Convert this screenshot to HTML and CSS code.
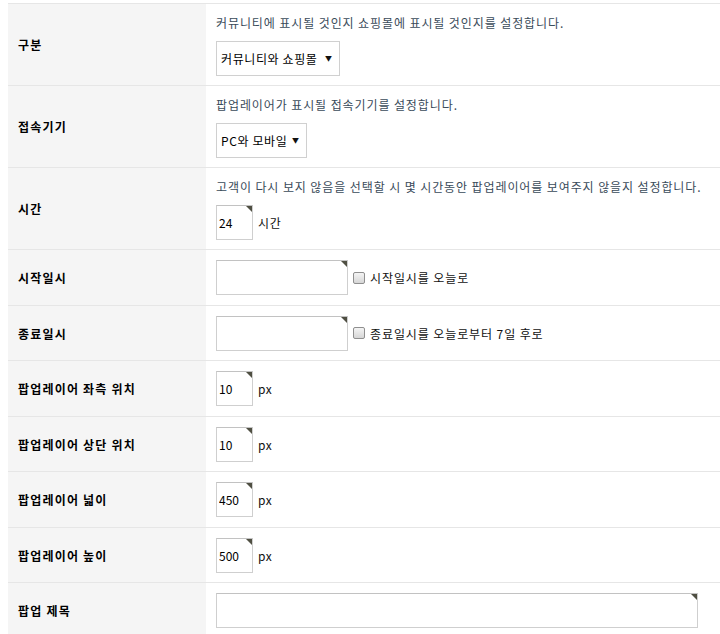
FILE: index.html
```html
<!DOCTYPE html>
<html>
<head>
<meta charset="UTF-8">
<title>팝업 설정</title>
<link rel="stylesheet" href="styles.css">
</head>
<body>
<table class="form">
<tr>
	<th>구분</th>
	<td>
		<p class="desc">커뮤니티에 표시될 것인지 쇼핑몰에 표시될 것인지를 설정합니다.</p>
		<div class="line">
			<span class="sel sel-wide"><select><option>커뮤니티와 쇼핑몰</option><option>커뮤니티</option><option>쇼핑몰</option></select></span>
		</div>
	</td>
</tr>
<tr>
	<th>접속기기</th>
	<td>
		<p class="desc">팝업레이어가 표시될 접속기기를 설정합니다.</p>
		<div class="line">
			<span class="sel sel-small"><select><option>PC와 모바일</option><option>PC</option><option>모바일</option></select></span>
		</div>
	</td>
</tr>
<tr>
	<th>시간</th>
	<td>
		<p class="desc">고객이 다시 보지 않음을 선택할 시 몇 시간동안 팝업레이어를 보여주지 않을지 설정합니다.</p>
		<div class="line">
			<span class="field"><input class="num" type="text" value="24"></span>
			<span class="unit">시간</span>
		</div>
	</td>
</tr>
<tr>
	<th>시작일시</th>
	<td>
		<div class="line">
			<span class="field"><input class="date" type="text"></span>
			<label class="chk"><input type="checkbox"> 시작일시를 오늘로</label>
		</div>
	</td>
</tr>
<tr>
	<th>종료일시</th>
	<td>
		<div class="line">
			<span class="field"><input class="date" type="text"></span>
			<label class="chk"><input type="checkbox"> 종료일시를 오늘로부터 7일 후로</label>
		</div>
	</td>
</tr>
<tr>
	<th>팝업레이어 좌측 위치</th>
	<td>
		<div class="line">
			<span class="field"><input class="num" type="text" value="10"></span>
			<span class="unit">px</span>
		</div>
	</td>
</tr>
<tr>
	<th>팝업레이어 상단 위치</th>
	<td>
		<div class="line">
			<span class="field"><input class="num" type="text" value="10"></span>
			<span class="unit">px</span>
		</div>
	</td>
</tr>
<tr>
	<th>팝업레이어 넓이</th>
	<td>
		<div class="line">
			<span class="field"><input class="num" type="text" value="450"></span>
			<span class="unit">px</span>
		</div>
	</td>
</tr>
<tr>
	<th>팝업레이어 높이</th>
	<td>
		<div class="line">
			<span class="field"><input class="num" type="text" value="500"></span>
			<span class="unit">px</span>
		</div>
	</td>
</tr>
<tr>
	<th>팝업 제목</th>
	<td>
		<div class="line">
			<span class="field"><input class="title" type="text"></span>
		</div>
	</td>
</tr>
</table>
</body>
</html>
```

FILE: styles.css
```css
body {
	margin: 3px 0 0 8px;
	background: #fff;
	font-family: "Noto Sans CJK KR", "Noto Sans", sans-serif;
	font-size: 12px;
	color: #000;
}
.form {
	width: 100%;
	border-collapse: collapse;
	border-top: 1px solid #e6e6e6;
}
.form tr {
	border-bottom: 1px solid #e6e6e6;
}
.form th {
	width: 178px;
	padding: 10px 10px 9.5px 10px;
	background: #f5f5f5;
	text-align: left;
	font-weight: bold;
	font-size: 12px;
	letter-spacing: 1.2px;
	vertical-align: middle;
}
.form td {
	padding: 10px 10px 9.5px 10px;
	vertical-align: middle;
}
.desc {
	margin: 0 0 8.5px 0;
	line-height: 18px;
	letter-spacing: 0.9px;
	color: #3a4b5a;
}
.line {
	display: flex;
	align-items: center;
	height: 35px;
}
.field {
	position: relative;
	display: inline-block;
	height: 35px;
}
.field::after {
	content: '';
	position: absolute;
	top: 1px;
	right: 1px;
	border-top: 6px solid #4f4f42;
	border-left: 6px solid transparent;
}
.field input {
	box-sizing: border-box;
	height: 35px;
	margin: 0;
	padding: 0 2px;
	border: 1px solid #cfcfcf;
	border-top-color: #c2c2c2;
	font-family: "Noto Sans CJK KR", "Noto Sans", sans-serif;
	font-size: 12px;
	color: #000;
	outline: none;
}
.num {
	width: 37px;
}
.date {
	width: 132px;
}
.title {
	width: 482px;
}
.unit {
	margin-left: 5px;
	letter-spacing: 0.6px;
	color: #111;
}
.chk {
	display: flex;
	align-items: center;
	margin-left: 5px;
	letter-spacing: 0.9px;
	color: #111;
}
.chk input {
	-webkit-appearance: none;
	appearance: none;
	box-sizing: border-box;
	width: 12px;
	height: 12px;
	margin: 0 5px 0 0;
	border: 1px solid #8f8f8f;
	border-radius: 2px;
	background: linear-gradient(#f4f4f4, #d6d6d6);
}
.sel {
	position: relative;
	display: inline-block;
	height: 35px;
}
.sel::after {
	content: '\25BC';
	position: absolute;
	right: 8px;
	top: 12px;
	font-size: 7px;
	color: #111;
	pointer-events: none;
}
.sel select {
	-webkit-appearance: none;
	appearance: none;
	box-sizing: border-box;
	height: 35px;
	margin: 0;
	padding: 0 4px;
	border: 1px solid #d0d0d0;
	border-radius: 0;
	background: #fff;
	font-family: "Noto Sans CJK KR", "Noto Sans", sans-serif;
	font-size: 12px;
	letter-spacing: 0.6px;
	color: #000;
}
.sel-wide select {
	width: 124px;
}
.sel-small select {
	width: 91px;
}
```
